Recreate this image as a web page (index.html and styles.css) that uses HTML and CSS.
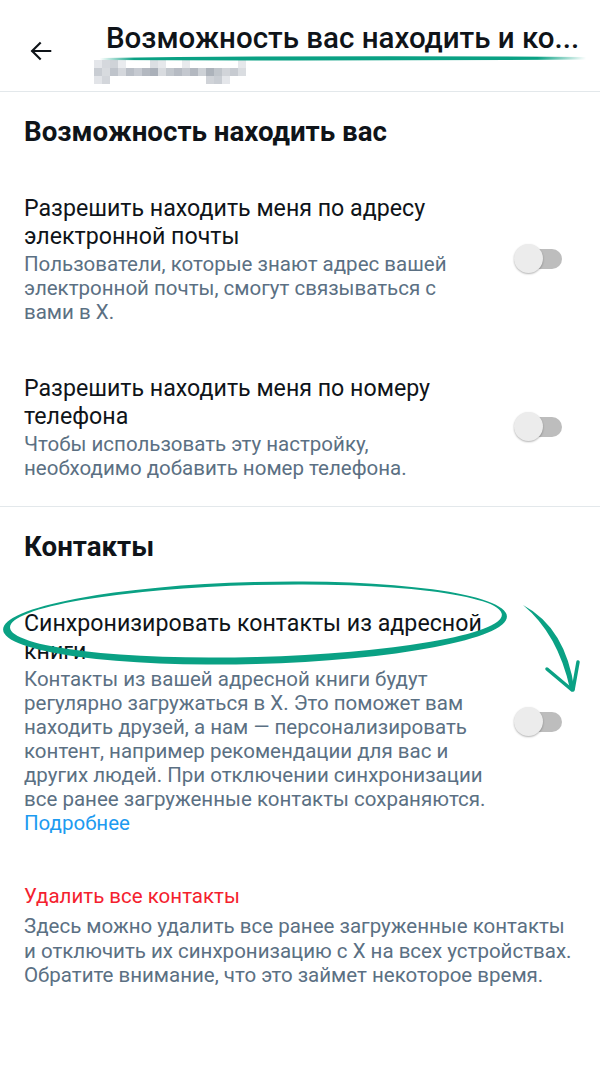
FILE: index.html
```html
<!DOCTYPE html>
<html lang="ru">
<head>
<meta charset="utf-8">
<title>Возможность вас находить и контакты</title>
<link rel="stylesheet" href="styles.css">
</head>
<body>
<div class="screen">
  <header class="topbar">
    <div class="back">
      <svg width="26" height="26" viewBox="0 0 24 24"><path d="M20.5 12H4M11 4.8l-7.2 7.2 7.2 7.2" fill="none" stroke="#0f1419" stroke-width="2" stroke-linecap="square"/></svg>
    </div>
    <div class="titles">
      <div class="title">Возможность вас находить и ко...</div>
      <svg class="handle" width="160" height="28" viewBox="0 0 160 28">
        <rect x="0" y="2" width="8" height="8" fill="#e4e6ea"/>
        <rect x="8" y="2" width="8" height="8" fill="#d5d8dd"/>
        <rect x="16" y="2" width="8" height="8" fill="#cfd3d8"/>
        <rect x="24" y="2" width="8" height="8" fill="#e9ebee"/>
        <rect x="56" y="2" width="8" height="8" fill="#dcdfe3"/>
        <rect x="64" y="2" width="8" height="8" fill="#e6e8eb"/>
        <rect x="88" y="2" width="8" height="8" fill="#e8eaed"/>
        <rect x="144" y="2" width="8" height="8" fill="#e6e8eb"/>
        <rect x="0" y="10" width="8" height="8" fill="#c9cdd3"/>
        <rect x="8" y="10" width="8" height="8" fill="#d8dbdf"/>
        <rect x="16" y="10" width="8" height="8" fill="#bfc4cb"/>
        <rect x="24" y="10" width="8" height="8" fill="#d4d7dc"/>
        <rect x="32" y="10" width="8" height="8" fill="#b9bec6"/>
        <rect x="40" y="10" width="8" height="8" fill="#c6cad1"/>
        <rect x="48" y="10" width="8" height="8" fill="#b3b8c0"/>
        <rect x="56" y="10" width="8" height="8" fill="#aab0b9"/>
        <rect x="64" y="10" width="8" height="8" fill="#d8dbdf"/>
        <rect x="72" y="10" width="8" height="8" fill="#c2c7cd"/>
        <rect x="80" y="10" width="8" height="8" fill="#b6bbc3"/>
        <rect x="88" y="10" width="8" height="8" fill="#c4c8cf"/>
        <rect x="96" y="10" width="8" height="8" fill="#b3b8c0"/>
        <rect x="104" y="10" width="8" height="8" fill="#cdd1d6"/>
        <rect x="112" y="10" width="8" height="8" fill="#adb3bb"/>
        <rect x="120" y="10" width="8" height="8" fill="#c0c5cb"/>
        <rect x="128" y="10" width="8" height="8" fill="#d1d4d9"/>
        <rect x="136" y="10" width="8" height="8" fill="#c7cbd1"/>
        <rect x="144" y="10" width="8" height="8" fill="#dadde1"/>
        <rect x="0" y="18" width="8" height="8" fill="#e2e4e8"/>
        <rect x="8" y="18" width="8" height="8" fill="#d3d6db"/>
        <rect x="112" y="18" width="8" height="8" fill="#d0d3d8"/>
        <rect x="120" y="18" width="8" height="8" fill="#c9cdd3"/>
        <rect x="128" y="18" width="8" height="8" fill="#e4e6ea"/>
      </svg>
    </div>
  </header>

  <section class="group">
    <h2 class="group-title">Возможность находить вас</h2>
    <div class="item">
      <div class="item-text">
        <div class="item-title">Разрешить находить меня по адресу электронной почты</div>
        <div class="item-desc">Пользователи, которые знают адрес вашей электронной почты, смогут связываться с вами в X.</div>
      </div>
      <span class="toggle"></span>
    </div>
    <div class="item item-second">
      <div class="item-text">
        <div class="item-title">Разрешить находить меня по номеру телефона</div>
        <div class="item-desc">Чтобы использовать эту настройку, необходимо добавить номер телефона.</div>
      </div>
      <span class="toggle"></span>
    </div>
  </section>

  <section class="group">
    <h2 class="group-title">Контакты</h2>
    <div class="item">
      <div class="item-text">
        <div class="item-title">Синхронизировать контакты из адресной книги</div>
        <div class="item-desc">Контакты из вашей адресной книги будут регулярно загружаться в X. Это поможет вам находить друзей, а нам — персонализировать контент, например рекомендации для вас и других людей. При отключении синхронизации все ранее загруженные контакты сохраняются.</div>
        <div class="link">Подробнее</div>
      </div>
      <span class="toggle"></span>
    </div>
    <div class="danger">
      <div class="danger-title">Удалить все контакты</div>
      <div class="danger-desc">Здесь можно удалить все ранее загруженные контакты и отключить их синхронизацию с X на всех устройствах. Обратите внимание, что это займет некоторое время.</div>
    </div>
  </section>

  <svg class="annotations" width="600" height="1067" viewBox="0 0 600 1067">
    <defs>
      <linearGradient id="ul" x1="0" x2="1" y1="0" y2="0">
        <stop offset="0" stop-color="#0aa184" stop-opacity="0"/>
        <stop offset="0.07" stop-color="#0aa184" stop-opacity="1"/>
        <stop offset="0.9" stop-color="#0aa184" stop-opacity="1"/>
        <stop offset="1" stop-color="#0aa184" stop-opacity="0"/>
      </linearGradient>
    </defs>
    <path d="M100 58 Q340 55 586 57 L586 59.5 Q340 61 100 60 Z" fill="url(#ul)"/>
    <g transform="rotate(-1.5 255 623)" fill="#0aa184">
      <path fill-rule="evenodd" d="M3 623 A252 41 0 1 0 507 623 A252 41 0 1 0 3 623 Z M10 621 A246 36 0 1 0 502 621 A246 36 0 1 0 10 621 Z"/>
    </g>
    <path d="M523 605 Q566 628 574.5 690 L570 689 Q558 634 523 605 Z" fill="#0aa184"/>
    <path d="M547 669 L572 690 M578 662 L573 690" stroke="#0aa184" stroke-width="3.5" stroke-linecap="round" fill="none"/>
  </svg>
</div>
</body>
</html>
```

FILE: styles.css
```css
* {
  box-sizing: border-box;
  margin: 0;
  padding: 0;
}

body {
  margin: 0;
  background: #ffffff;
  font-family: Roboto, "Noto Sans", "Liberation Sans", sans-serif;
  color: #0f1419;
}

.screen {
  position: relative;
  width: 600px;
  height: 1067px;
  overflow: hidden;
  background: #ffffff;
}

.topbar {
  display: flex;
  height: 92px;
  border-bottom: 1px solid #e3e8eb;
}

.back {
  width: 82px;
  height: 91px;
  flex: none;
  display: flex;
  align-items: center;
  justify-content: center;
  padding-top: 10px;
}

.titles {
  flex: 1;
  min-width: 0;
  margin-left: 24px;
  padding-top: 22px;
}

.title {
  font-size: 29.5px;
  line-height: 32px;
  font-weight: 500;
  white-space: nowrap;
  overflow: hidden;
  color: #0f1419;
}

.handle {
  display: block;
  margin-left: -12px;
  margin-top: 4px;
}

.group {
  padding: 24px 24px 4px 24px;
}

.group:first-of-type {
  border-bottom: 1px solid #e3e8eb;
}

.group-title {
  font-size: 27.7px;
  line-height: 32px;
  font-weight: 700;
  margin-bottom: 22px;
}

.item {
  display: flex;
  align-items: center;
  justify-content: space-between;
  padding: 24px 14px 24px 0;
}

.item-second {
  padding-top: 26px;
  padding-bottom: 22px;
}

.item-text {
  width: 465px;
}

.item-title {
  font-size: 23.2px;
  line-height: 28px;
  color: #0f1419;
}

.item-desc {
  margin-top: 2px;
  font-size: 20.5px;
  line-height: 24px;
  color: #5b7083;
}

.link {
  font-size: 20.5px;
  line-height: 24px;
  color: #1d9bf0;
}

.toggle {
  position: relative;
  flex: none;
  width: 48px;
  height: 30px;
}

.toggle::before {
  content: "";
  position: absolute;
  left: 10px;
  right: 0;
  top: 5px;
  height: 20px;
  border-radius: 10px;
  background: #bdbdbd;
}

.toggle::after {
  content: "";
  position: absolute;
  left: 0;
  top: 0;
  width: 29px;
  height: 29px;
  border-radius: 50%;
  background: #ececec;
  box-shadow: 0 1px 2px rgba(0, 0, 0, 0.3);
}

.danger {
  padding-top: 25px;
  width: 548px;
}

.danger-title {
  font-size: 20.5px;
  line-height: 24px;
  color: #f4212e;
  margin-bottom: 6px;
}

.danger-desc {
  font-size: 20.5px;
  line-height: 24.5px;
  color: #5b7083;
}

.annotations {
  position: absolute;
  left: 0;
  top: 0;
  pointer-events: none;
}
```
